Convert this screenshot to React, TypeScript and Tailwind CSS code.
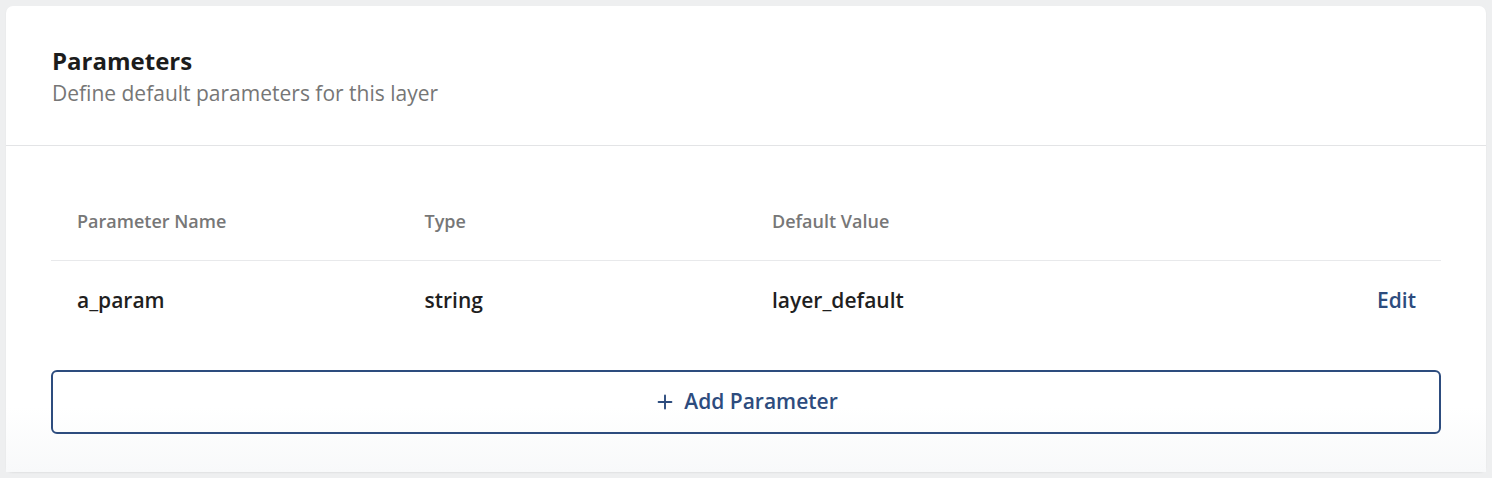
import { Plus } from "lucide-react";

type Param = {
  name: string;
  type: string;
  defaultValue: string;
};

const params: Param[] = [{ name: "a_param", type: "string", defaultValue: "layer_default" }];

const columns = ["Parameter Name", "Type", "Default Value", ""];

export default function App() {
  return (
    <div className="min-h-[478px] w-full bg-[#eeeff0] p-[6px] font-['Open_Sans',sans-serif]">
      <section className="rounded-[7px] bg-white shadow-[0_1px_2px_rgba(0,0,0,0.06)]">
        <header className="border-b border-[#e3e4e6] px-[46px] pb-[38px] pt-[40px]">
          <h2 className="text-[24px] font-bold leading-[30px] text-[#1c1c1c]">Parameters</h2>
          <p className="mt-[3px] text-[21px] leading-[28px] text-[#767676]">Define default parameters for this layer</p>
        </header>

        <div className="bg-gradient-to-b from-white from-80% to-[#f8f9fa] px-[45px] pb-[38px] pt-[62px]">
          <div className="grid grid-cols-4 border-b border-[#e8e9eb] pb-[26px]">
            {columns.map((col, i) => (
              <div key={i} className="pl-[26px] text-[18px] font-semibold leading-[26px] text-[#777777]">
                {col}
              </div>
            ))}
          </div>

          {params.map((p) => (
            <div key={p.name} className="grid grid-cols-4 items-center py-[24px]">
              <div className="pl-[26px] text-[21px] font-semibold leading-[30px] text-[#1f1f1f]">{p.name}</div>
              <div className="pl-[26px] text-[21px] font-semibold leading-[30px] text-[#1f1f1f]">{p.type}</div>
              <div className="pl-[26px] text-[21px] font-semibold leading-[30px] text-[#1f1f1f]">{p.defaultValue}</div>
              <div className="pr-[25px] text-right">
                <button className="text-[21px] font-semibold leading-[30px] text-[#2d4c7e]">Edit</button>
              </div>
            </div>
          ))}

          <button className="mt-[31px] flex h-[64px] w-full items-center justify-center gap-[8px] rounded-[6px] border-2 border-[#2d4c7e] text-[21px] font-semibold text-[#2d4c7e]">
            <Plus size={22} strokeWidth={2.1} />
            Add Parameter
          </button>
        </div>
      </section>
    </div>
  );
}
